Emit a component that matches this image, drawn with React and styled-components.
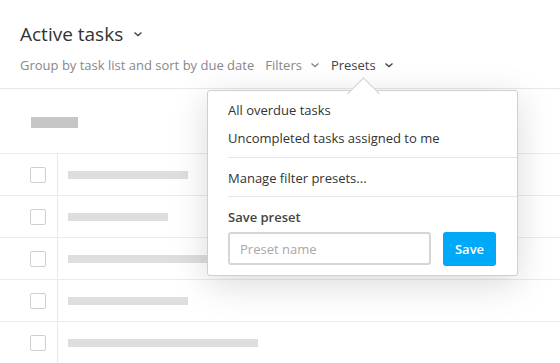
import styled, { createGlobalStyle } from "styled-components";

const GlobalStyle = createGlobalStyle`
  html, body {
    margin: 0;
    background: #fff;
    font-family: "Open Sans", "Noto Sans", sans-serif;
    overflow: hidden;
  }
`;

const Page = styled.div`
  position: relative;
  width: 560px;
  height: 363px;
  overflow: hidden;
`;

const Header = styled.header`
  padding: 21px 20px 0;
  height: 89px;
  box-sizing: border-box;
  border-bottom: 1px solid #e8e8e8;
`;

const Title = styled.h1`
  margin: 0;
  display: flex;
  align-items: center;
  gap: 10px;
  font-size: 19px;
  font-weight: 400;
  line-height: 26px;
  color: #333;
`;

const Toolbar = styled.div`
  display: flex;
  align-items: center;
  margin-top: 9px;
  font-size: 13px;
  line-height: 18px;
  color: #888;
`;

const ToolItem = styled.span`
  display: inline-flex;
  align-items: center;
  gap: 8px;
  margin-left: ${(p) => (p.$first ? "0" : "11px")};
  color: ${(p) => (p.$active ? "#444" : "#888")};
`;

const GroupHead = styled.div`
  height: 65px;
  box-sizing: border-box;
  display: flex;
  align-items: center;
  padding: 2px 0 0 31px;
  border-bottom: 1px solid #ebebeb;
`;

const Bar = styled.div`
  width: ${(p) => p.$w}px;
  height: ${(p) => p.$h || 8}px;
  background: ${(p) => p.$c || "#dedede"};
`;

const Row = styled.div`
  display: grid;
  grid-template-columns: 58px 1fr;
  height: 42px;
  box-sizing: border-box;
  border-bottom: 1px solid #ebebeb;
`;

const CheckCell = styled.div`
  display: flex;
  align-items: center;
  padding-left: 30px;
  border-right: 1px solid #f6e3e3;
`;

const Check = styled.div`
  width: 14px;
  height: 14px;
  border: 1px solid #cfcfcf;
  border-radius: 2px;
  background: #fff;
`;

const NameCell = styled.div`
  display: flex;
  align-items: center;
  padding-left: 10px;
`;

const Popover = styled.div`
  position: absolute;
  left: 207px;
  top: 90px;
  width: 311px;
  height: 186px;
  box-sizing: border-box;
  background: #fff;
  border: 1px solid #cfcfcf;
  border-radius: 3px;
  box-shadow: 0 8px 36px rgba(0, 0, 0, 0.15);
  padding: 0 0 0 20px;
`;

const Arrow = styled.div`
  position: absolute;
  left: 144px;
  top: -9px;
  width: 22px;
  height: 22px;
  background: #fff;
  border-left: 1px solid #cfcfcf;
  border-top: 1px solid #cfcfcf;
  transform: rotate(45deg);
`;

const Section = styled.div`
  position: relative;
  padding: ${(p) => p.$pad || "0"};
  border-bottom: ${(p) => (p.$divider ? "1px solid #e6e6e6" : "none")};
`;

const MenuItem = styled.div`
  font-size: 13px;
  line-height: 28px;
  color: #333;
`;

const Label = styled.div`
  font-size: 13px;
  font-weight: 600;
  line-height: 18px;
  color: #444;
  margin-bottom: 6px;
`;

const Form = styled.div`
  display: flex;
  gap: 12px;
`;

const Input = styled.input`
  width: 203px;
  height: 33px;
  box-sizing: border-box;
  border: 2px solid #d6d6d6;
  border-radius: 3px;
  padding: 0 10px;
  font-family: inherit;
  font-size: 13px;
  color: #333;
  outline: none;
  &::placeholder {
    color: #a8a8a8;
  }
`;

const SaveButton = styled.button`
  width: 53px;
  height: 34px;
  border: none;
  border-radius: 3px;
  background: #00a8f8;
  color: #fff;
  font-family: inherit;
  font-size: 13px;
  font-weight: 600;
  padding: 0;
`;

const Chevron = ({ color = "#555" }) => (
  <svg width="10" height="8" viewBox="0 0 10 8">
    <polyline points="1.5,2.5 5,5.5 8.5,2.5" fill="none" stroke={color} strokeWidth="1.4" />
  </svg>
);

const rows = [120, 100, 190, 120, 190];

export default function App() {
  return (
    <Page>
      <GlobalStyle />
      <Header>
        <Title>
          Active tasks <Chevron color="#444" />
        </Title>
        <Toolbar>
          <ToolItem $first>Group by task list and sort by due date</ToolItem>
          <ToolItem>
            Filters <Chevron color="#888" />
          </ToolItem>
          <ToolItem $active>
            Presets <Chevron color="#444" />
          </ToolItem>
        </Toolbar>
      </Header>
      <GroupHead>
        <Bar $w={47} $h={11} $c="#c6c6c6" />
      </GroupHead>
      {rows.map((w, i) => (
        <Row key={i}>
          <CheckCell>
            <Check />
          </CheckCell>
          <NameCell>
            <Bar $w={w} />
          </NameCell>
        </Row>
      ))}
      <Popover>
        <Arrow />
        <Section $divider $pad="5px 0 5px">
          <MenuItem>All overdue tasks</MenuItem>
          <MenuItem>Uncompleted tasks assigned to me</MenuItem>
        </Section>
        <Section $divider $pad="6px 0 4px">
          <MenuItem>Manage filter presets...</MenuItem>
        </Section>
        <Section $pad="11px 0 0">
          <Label>Save preset</Label>
          <Form>
            <Input placeholder="Preset name" />
            <SaveButton>Save</SaveButton>
          </Form>
        </Section>
      </Popover>
    </Page>
  );
}
